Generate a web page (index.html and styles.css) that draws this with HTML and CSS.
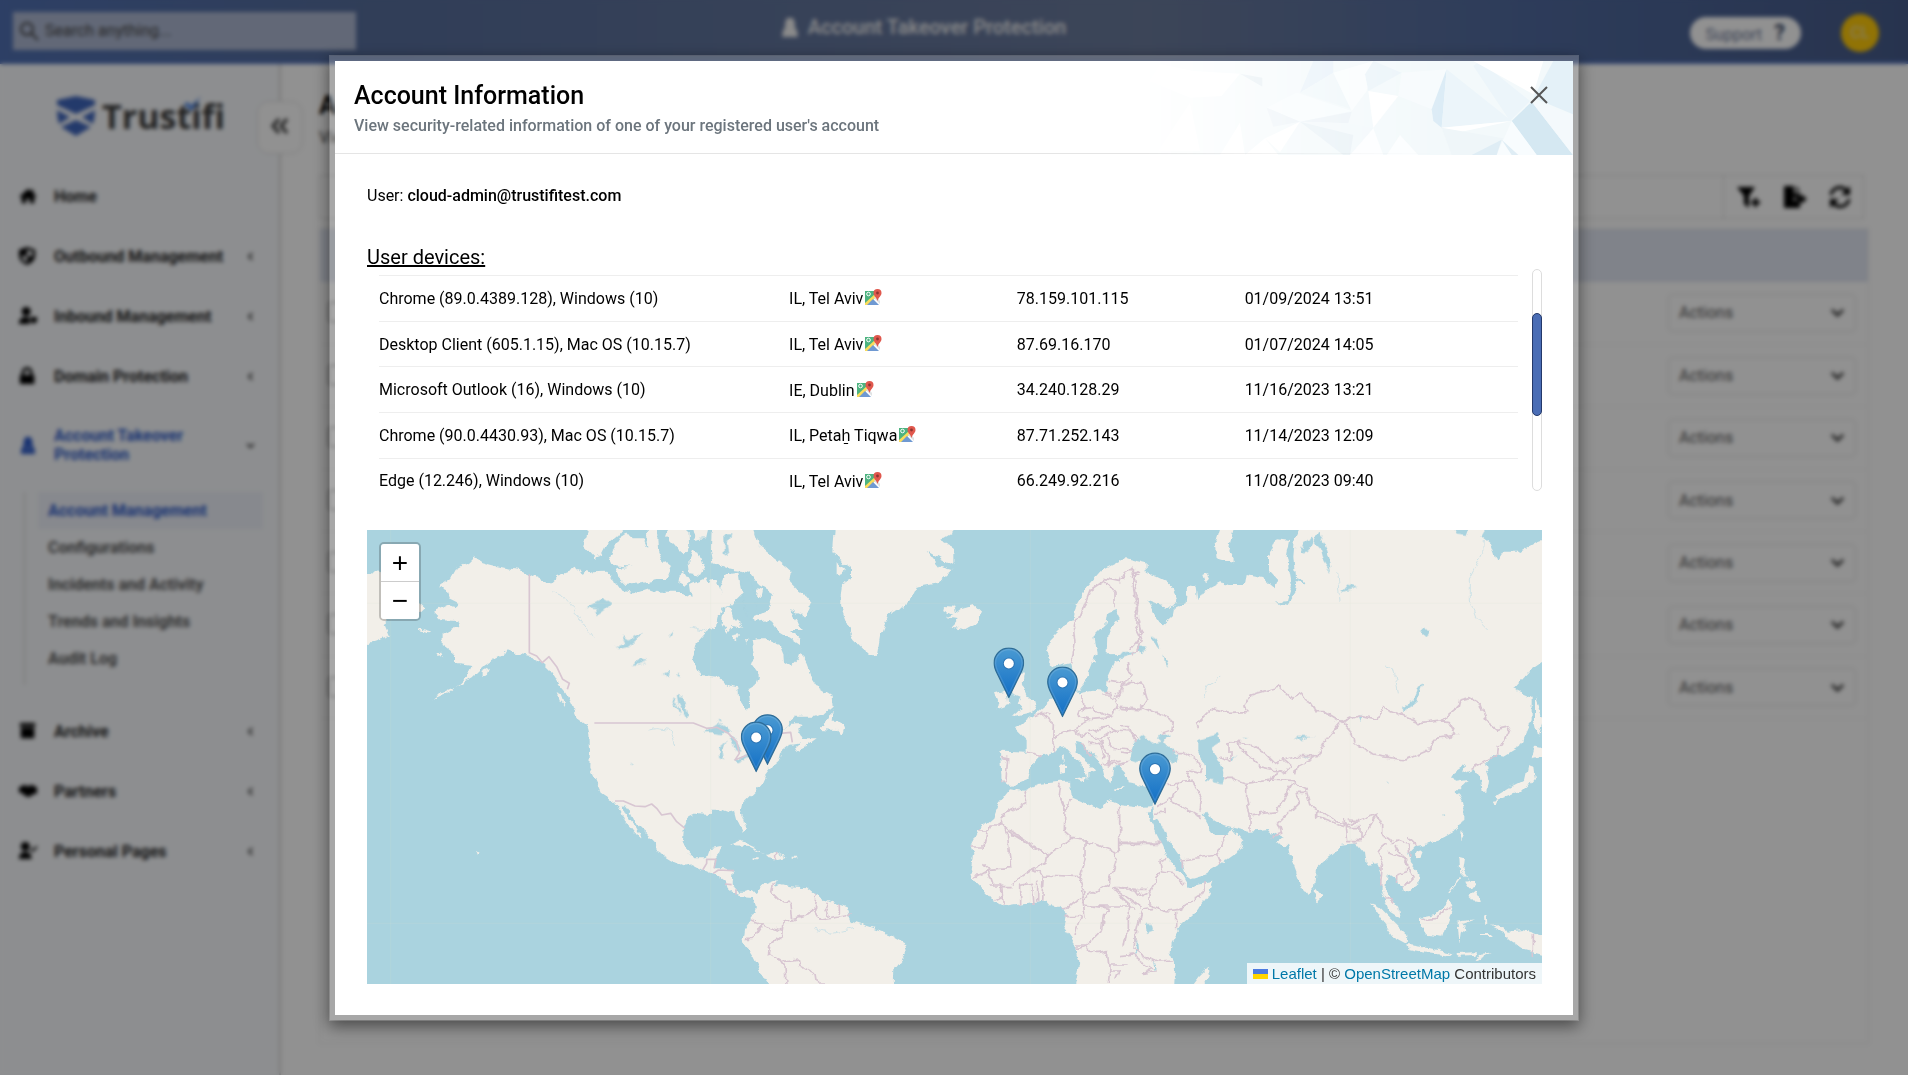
FILE: index.html
```html
<!DOCTYPE html>
<html lang="en">
<head>
    <meta charset="UTF-8">
    <meta name="viewport" content="width=device-width, initial-scale=1.0">
    <title>Account Takeover Protection</title>
    <link rel="stylesheet" href="styles.css">
</head>
<body>
    <svg class="sprite" aria-hidden="true">
        <symbol id="chevron" viewBox="0 0 16 16"><path d="M2 5l6 6 6-6" fill="none" stroke="currentColor" stroke-width="3"/></symbol>
        <symbol id="spy" viewBox="0 0 20 20"><path d="M7 1h6l2 5v5l2 2 1 7H2l1-7 2-2V6z" fill="currentColor"/><path d="M7 17l2-5h2l2 5" fill="none" stroke="#fff" opacity=".5"/></symbol>
        <symbol id="gmap" viewBox="0 0 18 18">
            <path d="M1 3h14v14H1z" fill="#fff"/>
            <path d="M1 3h10l3 5-13 9z" fill="#4db380"/>
            <path d="M1 15L11 6l2 2-9 9H1z" fill="#fbdc5b"/>
            <path d="M3 17l6-6 6 6z" fill="#6f99d2"/>
            <path d="M10 10l2-2 4 5v3z" fill="#dfe2e4"/>
            <circle cx="4.500" cy="6" r="1.800" fill="none" stroke="#fff"/>
            <path d="M13.500 1a4 4 0 0 1 4 4c0 3-3 4-4 8-1-4-4-5-4-8a4 4 0 0 1 4-4z" fill="#e0584d"/>
            <circle cx="13.500" cy="5" r="1.400" fill="#8f3430"/>
        </symbol>
        <linearGradient id="pin-fill" x1="0" y1="0" x2="0" y2="1"><stop offset="0" stop-color="#4a9ad2"/><stop offset="1" stop-color="#126fc6"/></linearGradient>
        <symbol id="pin" viewBox="0 0 25 41">
            <path d="M12.500.6C5.900.6.600 5.900.600 12.500c0 3 1 5.500 2.500 8.500l9.400 19.300L21.900 21c1.500-3 2.500-5.500 2.500-8.500C24.400 5.900 19.100.6 12.500.6z" fill="url(#pin-fill)" stroke="#2e6c97"/>
            <path d="M12.500 1.800a10.700 10.700 0 0 0-10.700 10.700c0 3 1 5 2.300 8L12.500 37.500l8.400-17c1.300-3 2.300-5 2.300-8A10.700 10.700 0 0 0 12.500 1.800z" fill="none" stroke="#fff" opacity=".12"/>
            <circle cx="12.500" cy="13" r="4.800" fill="#2d75b5"/>
            <circle cx="12.500" cy="13" r="4" fill="#fff"/>
        </symbol>
    </svg>

    <div class="app">
        <header class="topbar">
            <label class="search">
                <svg width="20" height="20" viewBox="0 0 20 20"><circle cx="8" cy="8" r="6" fill="none" stroke="#444" stroke-width="2"/><path d="M12 12l7 7" stroke="#444" stroke-width="2"/></svg>
                <input type="text" placeholder="Search anything..." aria-label="Search">
            </label>
            <div class="topbar-title">
                <svg width="20" height="22"><use href="#spy"/></svg>
                Account Takeover Protection
            </div>
            <div class="topbar-right">
                <button class="support">Support <b>?</b></button>
                <button class="avatar">CL</button>
            </div>
        </header>

        <div class="layout">
            <aside class="sidebar">
                <div class="logo">
                    <svg width="40" height="40" viewBox="0 0 40 40"><path d="M1 4L20 0l19 4v5L20 18 1 9zM1 14l13 7L3 28Q1 22 1 14zm38 0l-13 7 11 7q2-6 2-14zM5 31l15-7 15 7-15 9z" fill="#3f66bd"/></svg>
                    <span>Trustifi</span>
                    <svg class="tick" width="18" height="16" viewBox="0 0 18 16"><path d="M0 8l4-2 3 4L17 0 8 15z" fill="#3f7be0"/></svg>
                </div>
                <button class="collapse" aria-label="Collapse menu">
                    <svg width="18" height="18" viewBox="0 0 18 18"><path d="M8 2L2 9l6 7M16 2l-6 7 6 7" fill="none" stroke="#333" stroke-width="3"/></svg>
                </button>
                <nav class="menu">
                    <a href="#"><svg viewBox="0 0 20 20"><path d="M10 2L0 11h3v7h5v-5h4v5h5v-7h3l-4-4V3h-3v2z"/></svg><span>Home</span></a>
                    <a href="#"><svg viewBox="0 0 20 20"><path fill-rule="evenodd" d="M9 0l9 3v6c0 6-4 9-9 11-5-2-9-5-9-11V3zm0 3v7h6V5zm0 7H3c1 4 3 6 6 7z"/></svg><span>Outbound Management</span><svg class="arrow"><use href="#chevron"/></svg></a>
                    <a href="#"><svg viewBox="0 0 20 20"><circle cx="8" cy="5" r="5"/><path d="M0 19c0-6 3-8 8-8l4 1v7zM13 11h7v5l-4 3-3-3z"/></svg><span>Inbound Management</span><svg class="arrow"><use href="#chevron"/></svg></a>
                    <a href="#"><svg viewBox="0 0 20 20"><path fill-rule="evenodd" d="M1 9h2V6a6 6 0 0 1 12 0v3h2v10H1zm5 0h6V6a3 3 0 0 0-6 0z"/></svg><span>Domain Protection</span><svg class="arrow"><use href="#chevron"/></svg></a>
                    <a href="#" class="active"><svg><use href="#spy"/></svg><span>Account Takeover Protection</span><svg class="arrow open"><use href="#chevron"/></svg></a>
                    <div class="submenu">
                        <a href="#" class="current">Account Management</a>
                        <a href="#">Configurations</a>
                        <a href="#">Incidents and Activity</a>
                        <a href="#">Trends and Insights</a>
                        <a href="#">Audit Log</a>
                    </div>
                    <a href="#"><svg viewBox="0 0 20 20"><path d="M1 1h17v4H1zM2 6h15v12H2z"/></svg><span>Archive</span><svg class="arrow"><use href="#chevron"/></svg></a>
                    <a href="#"><svg viewBox="0 0 20 20"><path d="M0 6l6-3 4 2 4-2 6 3v7h-3l-6 4-5-2-3-3H0z"/></svg><span>Partners</span><svg class="arrow"><use href="#chevron"/></svg></a>
                    <a href="#"><svg viewBox="0 0 20 20"><circle cx="7" cy="5" r="5"/><path d="M0 19c0-6 3-8 7-8s7 2 7 8z"/><path d="M13 8l2 2 5-5" fill="none" stroke="#000" stroke-width="2"/></svg><span>Personal Pages</span><svg class="arrow"><use href="#chevron"/></svg></a>
                </nav>
            </aside>

            <main class="content">
                <h1>Account</h1>
                <p class="lead">View</p>
                <div class="toolbar">
                    <div class="tools">
                        <svg width="24" height="22" viewBox="0 0 24 22"><path d="M0 1h18l-6 9v12l-5-4v-8zM17 12h3v3h3v3h-3v3h-3v-3h-3v-3h3z"/></svg>
                        <svg width="24" height="22" viewBox="0 0 24 22"><path d="M1 0h10v7h6v4h-6v4h6v7H1zM13 0l4 5h-4zM18 8l6 5-6 5v-3h-5v-4h5z"/></svg>
                        <svg width="22" height="22" viewBox="0 0 22 22"><path d="M2 9a9 9 0 0 1 16-4M20 13A9 9 0 0 1 4 17" fill="none" stroke="#000" stroke-width="3"/><path d="M21 0v9h-9zM1 22v-9h9z"/></svg>
                    </div>
                </div>
                <div class="panel">
                    <table class="accounts">
                        <thead><tr><th></th><th></th></tr></thead>
                        <tbody>
                            <tr><td><input type="checkbox" aria-label="Select row 1"></td><td><div class="action"><select aria-label="Actions"><option>Actions</option></select><svg><use href="#chevron"/></svg></div></td></tr>
                            <tr><td><input type="checkbox" aria-label="Select row 2"></td><td><div class="action"><select aria-label="Actions"><option>Actions</option></select><svg><use href="#chevron"/></svg></div></td></tr>
                            <tr><td><input type="checkbox" aria-label="Select row 3"></td><td><div class="action"><select aria-label="Actions"><option>Actions</option></select><svg><use href="#chevron"/></svg></div></td></tr>
                            <tr><td><input type="checkbox" aria-label="Select row 4"></td><td><div class="action"><select aria-label="Actions"><option>Actions</option></select><svg><use href="#chevron"/></svg></div></td></tr>
                            <tr><td><input type="checkbox" aria-label="Select row 5"></td><td><div class="action"><select aria-label="Actions"><option>Actions</option></select><svg><use href="#chevron"/></svg></div></td></tr>
                            <tr><td><input type="checkbox" aria-label="Select row 6"></td><td><div class="action"><select aria-label="Actions"><option>Actions</option></select><svg><use href="#chevron"/></svg></div></td></tr>
                            <tr><td><input type="checkbox" aria-label="Select row 7"></td><td><div class="action"><select aria-label="Actions"><option>Actions</option></select><svg><use href="#chevron"/></svg></div></td></tr>
                        </tbody>
                    </table>
                </div>
            </main>
        </div>
    </div>

    <div class="overlay">
        <div class="modal" role="dialog" aria-labelledby="modal-title">
            <div class="modal-header">
                <svg class="facets" viewBox="0 0 1299 282" preserveAspectRatio="xMaxYMin slice" aria-hidden="true">
                    <rect width="1299" height="282" fill="#f3f9fb"/>
                    <path d="M150 110L245 105 300 38 160 30 60 10 30 60zM150 125L55 270H180z" fill="#fff"/>
                    <path d="M300 38l67 30v10zM380 140L470 95 635 150 480 182z" fill="#f7fcfe"/>
                    <path d="M300 38l67 12v27z" fill="#dfeaf0"/>
                    <path d="M480 95L520 0h60l0 35z" fill="#e7f1f9"/>
                    <path d="M480 95l100-60 55 110z" fill="#eff7fa"/>
                    <path d="M580 35L700 0 680 90 635 150z" fill="#fafdfe"/>
                    <path d="M700 0l85 35-100 55-10-50z" fill="#ebf4f9"/>
                    <path d="M685 90l90 15-75 95z" fill="#fff"/>
                    <path d="M785 35l-10 70 100 40 45-120z" fill="#f7fbfd"/>
                    <path d="M875 145l45-120-15 175-25-20z" fill="#dcecf6"/>
                    <path d="M920 25L905 200l210-20zM1020 0l-20 15 110 165 60-60z" fill="#ecf5fa"/>
                    <path d="M1000 0l180 100 30-100z" fill="#fff"/>
                    <path d="M1180 110L1240 0h59v160z" fill="#e4f1f8"/>
                    <path d="M1175 122l-60 58 75 102h109z" fill="#d5e8f2"/>
                    <path d="M1175 122l124 40v120z" fill="#f4f9fc"/>
                    <path d="M905 200l210-20-195 42z" fill="#fff"/>
                    <path d="M905 200l30 82h130l25-50z" fill="#eff6f9"/>
                    <path d="M1115 180l-45 102h120z" fill="#f8fcfe"/>
                    <path d="M1085 236l-90 46h75zM1085 236l50 46h-20z" fill="#dfedf5"/>
                    <path d="M380 140l100 42 155-30-10 35-145-5-80 15z" fill="#ebf2f7"/>
                    <path d="M480 182l-105 50 45 42z" fill="#fff"/>
                    <path d="M480 182l145 5 75 15-70 80z" fill="#f2f8fb"/>
                    <path d="M480 182l130 100h20l10-60z" fill="#e8f1f6"/>
                    <path d="M700 202l-70 80h100zM780 222l-40 60h95z" fill="#fcfeff"/>
                    <path d="M300 185l-60 97h75zM375 232l-60 50h100z" fill="#fff"/>
                </svg>
                <div class="modal-heading">
                    <h2 id="modal-title">Account Information</h2>
                    <p>View security-related information of one of your registered user's account</p>
                </div>
                <button class="close" aria-label="Close"><svg width="20" height="20" viewBox="0 0 20 20"><path d="M2 2l16 16M18 2L2 18" stroke="#555" stroke-width="2"/></svg></button>
            </div>

            <div class="modal-body">
                <p class="user">User: <b>cloud-admin@trustifitest.com</b></p>
                <h3>User devices:</h3>
                <div class="devices">
                    <table>
                        <tbody>
                            <tr><td>Chrome (89.0.4389.128), Windows (10)</td><td>IL, Tel Aviv<svg class="gmap"><use href="#gmap"/></svg></td><td>78.159.101.115</td><td>01/09/2024 13:51</td></tr>
                            <tr><td>Desktop Client (605.1.15), Mac OS (10.15.7)</td><td>IL, Tel Aviv<svg class="gmap"><use href="#gmap"/></svg></td><td>87.69.16.170</td><td>01/07/2024 14:05</td></tr>
                            <tr><td>Microsoft Outlook (16), Windows (10)</td><td>IE, Dublin<svg class="gmap"><use href="#gmap"/></svg></td><td>34.240.128.29</td><td>11/16/2023 13:21</td></tr>
                            <tr><td>Chrome (90.0.4430.93), Mac OS (10.15.7)</td><td>IL, Petaẖ Tiqwa<svg class="gmap"><use href="#gmap"/></svg></td><td>87.71.252.143</td><td>11/14/2023 12:09</td></tr>
                            <tr><td>Edge (12.246), Windows (10)</td><td>IL, Tel Aviv<svg class="gmap"><use href="#gmap"/></svg></td><td>66.249.92.216</td><td>11/08/2023 09:40</td></tr>
                        </tbody>
                    </table>
                    <div class="scrollbar"><div class="thumb"></div></div>
                </div>

                <div class="map">
                    <svg class="world" viewBox="21 30 3525 1362" preserveAspectRatio="xMidYMid slice" role="img" aria-label="Device locations">
                        <defs>
                            <filter id="coast" x="0" y="0" width="3600" height="1400" filterUnits="userSpaceOnUse">
                                <feTurbulence type="fractalNoise" baseFrequency=".035" numOctaves="3" seed="4"/>
                                <feDisplacementMap in="SourceGraphic" scale="22" xChannelSelector="R" yChannelSelector="G"/>
                            </filter>
                        </defs>
                        <rect x="0" y="0" width="3600" height="1420" fill="#aad3df"/>
                        <g class="land" filter="url(#coast)">
                            <!-- Americas -->
                            <path d="M0 155L60 158 120 200 195 265 180 280 120 250 70 310 87 350 0 380z"/>
                            <path d="M340 110L365 127 395 135 440 145 480 150 510 163 545 180 570 188 590 168 625 155 650 140 665 165 680 150 700 160 735 158 760 175 785 210 830 218 870 205 900 215 950 215 995 230 990 195 1035 175 1045 200 1055 180 1070 180 1085 225 1080 205 1100 160 1135 155 1145 225 1110 260 1085 265 1075 290 1070 320 1040 335 1010 370 1000 410 1005 430 1025 465 1070 470 1110 500 1135 505 1138 540 1160 573 1172 560 1165 510 1190 495 1197 465 1175 435 1185 410 1178 360 1190 355 1220 355 1235 365 1260 375 1270 400 1272 425 1295 440 1315 420 1322 398 1340 435 1355 475 1375 505 1415 530 1418 560 1395 580 1370 590 1305 590 1280 620 1240 645 1300 610 1322 610 1315 630 1330 655 1370 655 1335 680 1310 693 1305 683 1320 670 1290 675 1260 700 1255 720 1235 738 1215 765 1200 800 1150 850 1143 880 1158 925 1148 935 1133 905 1125 875 1105 880 1085 872 1060 872 1055 882 1010 880 985 892 973 920 968 960 975 985 1000 1012 1040 1012 1050 985 1085 978 1078 1000 1065 1015 1062 1045 1095 1045 1122 1052 1118 1090 1130 1115 1150 1122 1175 1110 1190 1125 1185 1135 1150 1132 1120 1118 1100 1102 1095 1085 1075 1070 1050 1060 1028 1050 1000 1035 975 1040 940 1025 890 995 888 970 850 930 830 915 810 875 795 855 788 858 800 885 820 910 845 955 835 950 815 925 795 905 785 880 765 845 725 818 710 785 688 740 690 690 688 640 683 620 650 595 640 560 620 520 595 490 570 450 545 425 510 408 470 400 440 388 430 405 405 418 370 440 335 475 290 500 325 465 340 435 300 430 285 430 285 405 245 375 245 345 280 325 298 320 292 300 245 298 222 275 262 255 290 262 300 250 270 235 260 210 237 198 270 175 285 148 325 125z"/>
                            <path d="M640 570L665 585 700 605 708 625 690 620 660 600zM590 520l12 4 12 35-14-15zM365 455l22-12-8 20-14 8zM228 400l16-2 4 10-14 2zM285 500l-40 18-28 20 50-22zM180 325l28 8-6 4-22-6z"/>
                            <path d="M785 45L760 85 750 115 760 135 815 140 765 145 775 170 800 195 840 190 890 180 920 180 935 145 910 125 895 95 890 20 860 25 865 90 850 55 815 55 800 35zM685 20L672 85 700 115 725 105 740 75 775 45 795 20zM920 50L945 75 965 110 985 90 982 20 930 20zM1000 90L1015 95 1032 145 1020 165 990 160 985 125zM995 20L1040 20 1032 55 1005 60zM960 165l15-10 20 30-20 15-20-10z"/>
                            <path d="M1055 20L1053 90 1060 130 1100 145 1145 150 1170 155 1200 195 1240 220 1225 270 1180 290 1185 305 1230 300 1250 330 1290 355 1320 375 1320 355 1290 330 1325 330 1315 310 1290 270 1335 290 1355 250 1340 230 1310 210 1290 190 1295 155 1265 130 1240 110 1200 80 1180 20z"/>
                            <path d="M1090 265l25 5 10 30 25 20-35-5-15 20-15-20zM1192 205l18 4-5 22-17-4zM1115 350l25-5-10 16zM1158 353l10 4-6 14zM1418 568L1400 600 1380 627 1430 630 1445 648 1452 625 1440 605 1415 605z"/>
                            <path d="M1110 975L1140 962 1180 980 1215 1003 1165 978zM1220 1006l25-10 38 14-35 9-28-6zM1295 1010h17v6h-17zM1178 1012h18v6h-18zM345 990l14 8-8 8z"/>
                            <g transform="translate(1140 0)">
                                <path d="M0 1115L40 1115 45 1125 70 1095 110 1080 105 1100 125 1095 150 1102 200 1105 225 1125 265 1145 320 1165 335 1205 395 1225 450 1245 495 1270 500 1300 460 1350 457 1410 95 1410 70 1370 40 1310 8 1260 12 1225 35 1195 48 1160 38 1125 0 1127z"/>
                                <path d="M285 10L280 90 300 120 330 140 330 180 305 195 300 255 320 310 340 360 370 390 410 410 420 350 445 285 480 270 510 240 530 200 590 190 635 150 600 140 560 90 640 135 640 80 600 60 650 30 640 10zM290 130l25 15-10 25-15-10z"/>
                                <path d="M615 258L640 260 645 280 665 265 700 255 725 280 715 305 675 328 635 320 650 300 620 295 640 285 612 270z"/>
                                <!-- Europe and Africa -->
                                <path d="M812 798L785 780 780 700 785 692 860 695 860 660 825 625 850 605 890 580 930 545 950 520 950 500 960 460 985 450 990 500 1015 520 1060 512 1095 515 1100 480 1110 460 1125 425 1160 418 1220 400 1220 640 1195 690 1190 720 1155 735 1120 740 1115 790 1095 770 1085 735 1060 705 1020 670 1005 665 1010 695 1050 730 1065 755 1045 760 1045 780 1030 745 975 682 950 690 900 710 875 735 865 775 830 790zM1005 775l35-5-5 18zM962 735l13-5v28l-12 4zM965 710l7-4-2 20zM1120 802h30v5h-30z"/>
                                <path d="M940 440L925 420 925 365 960 330 1000 300 1010 250 1040 200 1080 155 1120 135 1160 115 1220 130 1220 400 1100 403 1102 340 1140 290 1130 270 1105 280 1100 310 1060 350 1070 400 1050 450 1040 480 1010 515 990 430z"/>
                                <path d="M825 480L850 455 845 485 865 530 890 550 880 575 815 590 845 565 830 555 845 530 820 520zM765 520L800 510 805 555 770 568 775 545z"/>
                                <path d="M810 805L850 812 895 792 960 785 990 785 995 830 1040 850 1080 870 1105 840 1140 855 1190 862 1240 858 1220 880 1240 920 1270 980 1285 1020 1320 1055 1335 1085 1345 1100 1420 1085 1405 1125 1365 1180 1320 1220 1295 1260 1292 1300 1308 1340 1305 1410 1000 1410 1018 1330 1005 1270 970 1220 980 1180 960 1160 935 1160 920 1142 880 1150 830 1155 790 1162 760 1145 735 1115 700 1080 692 1050 700 1000 692 975 715 930 760 890 775 850zM1405 1340L1410 1365 1390 1410 1345 1410 1375 1370z"/>
                            </g>
                            <g transform="translate(2280 0)">
                                <!-- Asia -->
                                <path d="M0 120L30 130 60 150 110 170 150 190 172 240 160 262 125 255 85 240 110 290 130 318 160 290 165 265 200 250 205 195 230 200 235 240 250 215 300 190 330 195 375 195 380 165 430 175 465 205 475 180 447 150 447 110 470 55 510 60 500 110 515 190 500 240 470 245 500 255 525 215 530 180 560 190 570 220 550 180 525 170 520 110 525 50 545 10 1100 10 1085 50 1110 70 1130 125 1150 95 1200 95 1250 65 1290 50 1290 410 1230 450 1180 505 1235 530 1235 600 1200 680 1150 710 1120 705 1095 735 1110 780 1105 815 1085 815 1080 770 1060 745 1030 760 1035 735 990 765 1005 785 1040 780 1010 810 1030 850 1030 895 1005 935 960 960 905 975 880 980 862 1000 870 1030 895 1060 895 1090 855 1118 850 1100 830 1085 800 1065 795 1110 835 1165 840 1195 810 1175 785 1110 785 1070 770 1030 740 1035 735 1000 710 970 660 975 640 1000 588 1045 582 1100 560 1125 545 1100 515 1020 505 970 490 985 470 965 490 955 445 930 390 935 345 925 310 915 270 890 262 875 245 880 270 925 285 945 320 945 335 925 370 965 350 1000 300 1035 260 1060 200 1078 190 1050 180 1010 145 960 125 915 110 895 105 900 100 860 110 800 80 800 20 790 15 755 0 740z"/>
                                <path d="M305 10L285 75 290 115 345 130 325 90 345 10zM247 168l12-6 8 14-12 14zM1225 735L1240 740 1245 780 1225 805 1180 820 1130 840 1125 830 1175 800 1215 780zM1118 842l17-2-5 22zM1245 680L1290 690 1266 708 1235 715zM1245 535L1258 570 1270 600 1255 650 1245 600zM1018 935h12l-8 33zM885 995l25-5-8 20-15 2zM585 1105L605 1130 595 1147 583 1140z"/>
                                <path d="M750 1150L775 1160 830 1215 862 1245 860 1272 820 1250 785 1200zM862 1275L930 1285 1000 1300 990 1308 920 1298 865 1287zM1010 1302l60-2-4 8-55 2zM1080 1302l35-5-50 25zM900 1195L945 1185 985 1140 1000 1155 990 1190 970 1250 920 1245 900 1215zM1010 1205L1065 1198 1025 1212 1045 1240 1020 1235 1015 1272zM1018 1010L1035 1015 1030 1050 1050 1080 1020 1050zM1045 1130L1070 1110 1080 1145 1055 1140zM1035 1085l30-5 8 20-25 5zM1095 1190l8-4 2 25-8 4zM1110 1220L1150 1218 1160 1235 1210 1230 1290 1255 1290 1310 1215 1290 1170 1260 1150 1240zM1080 1245h40v6h-40zM1020 1070l-35 50 4-1 34-44z"/>
                            </g>
                        </g>
                        <g class="water" filter="url(#coast)">
                            <path d="M1030 640L1060 622 1075 612 1112 632 1105 645 1070 640zM1100 665L1088 690 1092 720 1078 715 1075 685zM1100 648L1125 656 1140 670 1140 700 1126 690 1115 662zM1125 722L1165 703 1168 710 1135 727zM680 262L710 245 735 238 755 250 735 270 708 290 702 280 715 265zM768 382L795 370 785 350 805 362 850 335 840 350 800 385 775 390zM815 435L835 418 865 422 835 432zM950 525L970 530 985 585 975 588 955 550zM935 535l8 4 20 40-6 4zM912 460l14-6-4 22zM1092 40l22 0-10 40 5 30-15-10zM950 465l10-4-2 10zM1075 600h10l-4 8zM925 340l14-8-8 16zM1140 160l30 20 20 60-10 60-25-30-10-80zM808 724l10 8-2 4zM1275 400l10-4 4 10-8 4z"/>
                            <g transform="translate(2280 0)">
                                <path d="M30 722L40 670 70 648 95 670 125 665 110 650 150 640 135 668 175 705 170 725 100 715 50 730zM235 660L295 642 298 665 275 680 305 740 310 760 305 790 258 780 258 740 235 690zM845 565L882 535 900 492 906 495 890 545 855 570zM518 665L540 650 580 650 530 660zM55 375L80 380 65 405zM0 400L52 396 0 416zM95 350l18 12 8 22-15-5zM130 400l18 40-14-12zM80 240l50 20-30-5zM550 710l22-4-18 8zM370 650l16 2-10 4zM335 715l12-5-6 12zM595 40l18 30 15 55 5 30-20-30-10-40-20-20zM545 70l30-20 8 10-20 40zM665 215l20-25 30 10-35 10zM75 1215h20l4 16-18 8zM900 325l30 5-12 24zM715 585l15-2-8 20zM540 80l30 15-20 5zM1000 20h50l-10 28-30-4z"/>
                                <path d="M45 1255l4 40 6 4-4-46zM95 1315l10 40-5 0zM795 785l12 2-5 6zM970 882l6 2-4 5z"/>
                            </g>
                        </g>
                        <g class="rivers" filter="url(#coast)">
                            <path d="M580 215l30 15 30 30 20 40 40 55M865 630l25-4 40 5 14 50M985 320l55 12M3370 60l-2 40-40 80 0 60 20 55 35 35M2930 160l10 80M2530 530l10-30 45-30M3070 435l30 5 15 80M1360 1225l60 15 60-15"/>
                        </g>
                        <g class="borders">
                            <path d="M508 163V398L530 408 547 428 567 410 590 440 608 478 628 490 622 508M703 609H1000L1040 625 1070 622 1105 640 1130 665 1138 700 1125 720 1160 706M765 843L790 843 825 858 855 860 875 852 890 865 905 885 932 880 950 905 975 925M1028 1050L1040 1030 1040 1018 1068 1018 1062 1045M1060 1060L1075 1050 1122 1052M1095 1092l20 2M1128 1108v16M1262 640l30-3 5 30"/>
                            <g transform="translate(1140 0)" filter="url(#coast)">
                                <path d="M100 1085L95 1115 125 1145 152 1148 158 1200 130 1205 125 1250 90 1275 85 1300 125 1325 135 1340 138 1392M35 1200L68 1212 40 1255 15 1255M68 1215l60 20M130 1325l45-8 5 20 45 25 5 30h22M158 1200l45-15 20-15 5-50M223 1165l20 35 95-15M265 1145l-8 25 8 22M298 1155v30M110 995v22"/>
                                <path d="M860 696l45 12M785 712l18 4-5 65-15 0M900 577l40 35-2 50 5 35M880 590l30-10 25 5M940 655l25-15 40-8 5-15 40-20-35-10 8-20 35-5 25 20 30 8M1025 525l5 50M1095 518l15 0 20 40-15 35-60 5M1100 480l50 8 20-20-5-45M1112 525h-25M1150 490l-10 30-15 10M1135 565l70 3M1045 635l60-15 20 10-40 25-40-10-30 5-5-20M1125 630l45 3 25 25M1100 655l20 30 55 5M1045 670l35 0 15 40-10 10M1080 660l25 40 0 35 60-10M1085 735l60-15M1020 665l30 40"/>
                                <path d="M995 430L1005 370 1000 320 1020 290 1050 210 1095 180 1125 220 1125 265M1095 175l45 10 15-35 20-2 15 15-10 35 12 70-5 55 15 30-10 40-15 10M960 788l-5 35 20 45-2 65 25 22-78 48-145-95M960 830l20 40 15-30M852 812l8 35-78 42v22M715 930h30l5-15h35v-8M782 908l20 30 10 105-65 5-20-18M805 935l115 70-5 25-40 20-60 40M692 978h40l10-45M1000 955l32 5 95 35 12-5V860M1140 970h120M1035 960l0 60-15 50-110-5-35-15M700 1065h25M700 1075l45-25 15 45M745 1095h40l0 35-20 10M785 1100h30M790 1160l-5-60M842 1155v-60l35-5 5 65M890 1145v-60M905 1142l5-75M1020 1070l15 50-45 40-25 5M1127 995l0 35-20 60-70 40-10 20M1030 1155l80 10-20 20-5 45-50 50-30 5M975 1187h50l-20 55M1025 1110l10 80M1035 1158l130 0-45-55 15 0 55 5 30 0M1125 1105l80 60M1005 1275h35l10 22h30l25-5 5 50-5 50M1108 1335h55M1165 1160l0 60-10 60M1108 1350h30l-10 25"/>
                            </g>
                            <g transform="translate(2280 0)" filter="url(#coast)">
                                <path d="M235 625L230 610 275 565 330 580 385 578 375 560 390 525 480 500 515 535 550 518 585 575 615 575 665 605 715 585 775 598 785 560 900 608 960 600 985 605 1010 645 950 655 915 695 855 720 755 705 705 670 700 645 665 605M965 600L1015 560 1020 540 1050 533 1080 550 1095 600 1130 628 1170 620 1150 672 1132 675 1130 705 1055 748M665 605l-50 60-20 45-70 0-60 20-30-30-50-30-55-5v60M330 725l-30-15M310 775l30 0 40 15 75-10 10-30-45-10-75-75M380 790v50l10 45 0 50M390 885l80-10 50-90-65-5M465 745l30 15 20-20-30-25M520 790l45 20-10 10-30 0 15 25-65 65 10 30-30 10M530 760l5-25 60-30M560 810l15 50 100 55 40-10 55-20 15 30 0 30 35 15M590 870l0 20 80 30v-20M675 910l5 55 40 0 0-45-40 0M680 900l35 2M765 890l-30 50-20 20M800 970l-25 20 15 40-5 70M805 1000l55 20 0 35-30 10 0 25M815 970l20-10 30 10 5 40M825 975l20 35 35 60-30 30M870 955l20 20M200 750l40 10 5-30-55-35-35 0M200 755l15 30 30 50-5 40M140 790l70-5-5-30M110 860l50-30 20-45M150 840l90 50M105 880l30 0 0-20M190 1050l0-30 100-15 30-60M290 1005l10 25M0 970h125M140 1018l-20 10 5 25 35 5 35 35M120 1055l-30 60 0 40 50 18 40-5 60-40 15-25v-20M95 1115l-30 15-15-20-50-5M0 1130l45 40M170 1225v-50M50 1290l50 35 60-5M45 1290l5-60 15-60 35-5M900 1200l55-5 20-30 20 0M1240 1240v70M800 1130l20 20M0 565l60 5 20-30-15-50-30-5-35 15M60 560l100 40-5 30-30 10M0 620l25 0 30 45M40 145l0 30 12 60 0 60 15 50-35 45M60 160l-25 15M0 690l30 5M0 1310l40-5 55 40-30 15 45-5"/>
                            </g>
                        </g>
                        <path class="tiles" d="M92 30v1362M1052 30v1362M2011 30v1362M2971 30v1362M21 250h3525M21 1210h3525"/>
                        <use href="#pin" x="1900" y="382" width="93" height="153"/>
                        <use href="#pin" x="2061" y="439" width="93" height="153"/>
                        <use href="#pin" x="1176" y="582" width="93" height="153"/>
                        <use href="#pin" x="1142" y="604" width="93" height="153"/>
                        <use href="#pin" x="2337" y="696" width="96" height="160"/>
                    </svg>
                    <div class="zoom">
                        <button aria-label="Zoom in">+</button>
                        <button aria-label="Zoom out">−</button>
                    </div>
                    <div class="attribution">
                        <svg width="15" height="10" viewBox="0 0 15 10"><path d="M0 0h15v5H0z" fill="#4c7be1"/><path d="M0 5h15v5H0z" fill="#ffd500"/></svg>
                        <a href="#">Leaflet</a> | © <a href="#">OpenStreetMap</a> Contributors
                    </div>
                </div>
            </div>
        </div>
    </div>
</body>
</html>
```
FILE: styles.css
```css
* {
    box-sizing: border-box;
}
body {
    margin: 0;
    min-height: 100vh;
    font-family: Roboto, sans-serif;
    font-size: 16px;
    color: #000;
    background-color: #fff;
}
h1, h2, h3, p {
    margin: 0;
}
a {
    text-decoration: none;
}
button, input, select {
    font-family: inherit;
    font-size: 16px;
}
.sprite {
    position: absolute;
    width: 0;
    height: 0;
}

/* Page behind the dialog */
.app {
    display: flex;
    flex-direction: column;
    height: 100vh;
    overflow: hidden;
}
.topbar {
    display: grid;
    grid-template-columns: 1fr auto 1fr;
    align-items: center;
    height: 64px;
    padding: 0 29px 0 13px;
    background: linear-gradient(to right, #5070b2, #566d9b 20%, #6a7a9c 60%, #506a9f 80%, #465b8a);
    border-bottom: 3px solid #5070b8;
}
.search {
    display: flex;
    align-items: center;
    gap: 4px;
    width: 343px;
    height: 38px;
    padding: 0 6px;
    background-color: #adb8d2;
}
.search input {
    flex: 1;
    min-width: 0;
    border: none;
    background: none;
}
.search input::placeholder {
    color: #444;
}
.topbar-title {
    display: flex;
    align-items: center;
    gap: 8px;
    padding: 0 46px 8px 0;
    font-size: 20px;
    font-weight: 500;
    color: #f2f2f2;
}
.topbar-right {
    display: flex;
    justify-content: flex-end;
    align-items: center;
    gap: 40px;
    padding-top: 4px;
}
.support {
    height: 32px;
    padding: 0 16px;
    border: none;
    border-radius: 16px;
    background-color: #fff;
    color: #6a7796;
}
.support b {
    margin-left: 8px;
    font-size: 22px;
    line-height: 24px;
    color: #34435f;
}
.avatar {
    width: 38px;
    height: 38px;
    padding: 0;
    border: none;
    border-radius: 50%;
    background-color: #ffca0a;
    color: #e8e0c0;
}
.layout {
    display: flex;
    flex: 1;
    min-height: 0;
}
.sidebar {
    position: relative;
    flex: 0 0 281px;
    background-color: #f8fafd;
    border-right: 2px solid #d4d4d4;
}
.logo {
    position: relative;
    display: flex;
    align-items: center;
    gap: 6px;
    padding: 26px 0 0 56px;
    height: 78px;
    font-family: "Open Sans", sans-serif;
    font-size: 34px;
    font-weight: 700;
    color: #3c3c3c;
}
.tick {
    position: absolute;
    top: 32px;
    left: 184px;
}
.collapse {
    position: absolute;
    top: 37px;
    right: -24px;
    width: 46px;
    height: 53px;
    border: 1px solid #ddd;
    border-radius: 12px;
    background-color: #fff;
}
.menu {
    padding: 24px 24px 0 18px;
}
.menu > a {
    display: flex;
    align-items: center;
    gap: 16px;
    height: 60px;
    font-weight: 700;
    line-height: 19px;
    color: #222;
}
.menu > a svg {
    flex: 0 0 20px;
    height: 18px;
}
.menu > a span {
    flex: 1;
}
.menu > a svg.arrow {
    flex: 0 0 9px;
    height: 9px;
    color: #333;
    transform: rotate(90deg);
}
.menu > a svg.open {
    transform: none;
}
.menu > a.active {
    height: 78px;
    color: #2c5ac8;
}
.submenu {
    display: flex;
    flex-direction: column;
    margin: 8px -8px 16px 6px;
    padding: 0 0 8px 13px;
    border-left: 1px solid #ccc;
}
.submenu a {
    padding: 0 10px;
    line-height: 37px;
    font-weight: 700;
    color: #555;
}
.submenu a.current {
    background-color: #eef1f9;
    color: #2c5ac8;
}
.content {
    flex: 1;
    padding: 24px 39px 32px 38px;
    background-color: #fff;
}
.content h1 {
    font-size: 26px;
    line-height: 34px;
}
.lead {
    line-height: 32px;
    font-weight: 500;
    color: #666;
}
.toolbar {
    display: flex;
    justify-content: flex-end;
    height: 44px;
    margin: 21px 5px 9px 0;
    border: 1px solid #ddd;
}
.tools {
    display: flex;
    align-items: center;
    gap: 22px;
    padding: 0 12px 0 13px;
    border-left: 1px solid #ddd;
}
.panel {
    height: 816px;
    border: 1px solid #eee;
}
.accounts {
    width: 100%;
    height: 490px;
    border-collapse: collapse;
}
.accounts th {
    height: 53px;
    background-color: #e1e6f2;
}
.accounts td {
    height: 62px;
    padding: 0 12px 0 4px;
    border-bottom: 1px solid #f2f2f2;
}
.accounts input {
    width: 20px;
    height: 20px;
}
.action {
    display: flex;
    align-items: center;
    width: 188px;
    height: 38px;
    margin-left: auto;
    padding-right: 10px;
    border: 1px solid #ddd;
    border-radius: 5px;
}
.action select {
    flex: 1;
    padding-left: 10px;
    border: none;
    background: none;
    appearance: none;
    color: #555;
}
.action svg {
    width: 15px;
    height: 15px;
    color: #444;
}

/* Dialog */
.overlay {
    position: fixed;
    inset: 0;
    display: flex;
    align-items: flex-start;
    justify-content: center;
    padding-top: 55px;
    background-color: rgba(0, 0, 0, 0.43);
    backdrop-filter: blur(2px);
}
.modal {
    width: 90%;
    max-width: 1250px;
    border: 6px solid rgba(255, 255, 255, 0.2);
    background-color: #fff;
    background-clip: padding-box;
    box-shadow: 0 5px 15px rgba(0, 0, 0, 0.5);
}
.modal-header {
    position: relative;
    display: flex;
    justify-content: space-between;
    align-items: flex-start;
    height: 93px;
    padding: 20px 24px 0 19px;
    border-bottom: 1px solid #e5e5e5;
}
.facets {
    position: absolute;
    top: 0;
    right: 0;
    width: 433px;
    height: 94px;
    mask-image: linear-gradient(to right, transparent, rgba(0, 0, 0, 0.6) 35%, #000 70%);
}
.modal-heading {
    position: relative;
}
.modal-heading h2 {
    font-size: 25px;
    line-height: 29px;
    font-weight: 500;
}
.modal-heading p {
    line-height: 32px;
    font-weight: 500;
    color: #6c757d;
}
.close {
    position: relative;
    display: flex;
    margin-top: 4px;
    padding: 0;
    border: none;
    background: none;
}
.modal-body {
    padding: 32px 31px 31px 32px;
}
.user {
    line-height: 20px;
}
.user b {
    font-weight: 500;
}
.modal-body h3 {
    margin-top: 39px;
    font-size: 20px;
    line-height: 24px;
    font-weight: 400;
    text-decoration: underline;
}
.devices {
    display: flex;
    gap: 14px;
    height: 222px;
    margin-bottom: 39px;
    padding-left: 12px;
}
.devices table {
    flex: 1;
    height: 228px;
    margin-top: 6px;
    border-collapse: collapse;
    table-layout: fixed;
}
.devices tr {
    border-top: 1px solid #eee;
}
.devices td {
    width: 20%;
    padding: 0;
}
.devices td:first-child {
    width: 36%;
}
.devices td:last-child {
    width: 24%;
}
.gmap {
    width: 18px;
    height: 18px;
    margin-left: 1px;
    vertical-align: -2px;
}
.scrollbar {
    width: 10px;
    padding-top: 43px;
    border: 1px solid #ddd;
    border-radius: 5px;
}
.thumb {
    height: 103px;
    margin: 0 -1px;
    border: 1px solid #24396a;
    border-radius: 5px;
    background-color: #4a6db5;
}
.map {
    position: relative;
    aspect-ratio: 1175 / 454;
    overflow: hidden;
}
.world {
    display: block;
    width: 100%;
    height: 100%;
}
.land {
    fill: #f2efe9;
}
.water {
    fill: #aad3df;
}
.rivers, .borders, .tiles {
    fill: none;
}
.rivers {
    stroke: #cfe2e6;
    stroke-width: 3;
}
.borders {
    stroke: #d8c6d2;
    stroke-width: 5;
    stroke-linejoin: round;
}
.tiles {
    stroke: #d5e0d0;
    stroke-width: 2;
    opacity: 0.25;
}
.zoom {
    position: absolute;
    top: 12px;
    left: 12px;
    display: flex;
    flex-direction: column;
    border: 2px solid rgba(0, 0, 0, 0.2);
    border-radius: 5px;
    background-clip: padding-box;
}
.zoom button {
    width: 38px;
    height: 37px;
    padding: 0;
    border: none;
    border-radius: 0 0 3px 3px;
    background-color: #fff;
    font-family: "Liberation Sans", sans-serif;
    font-size: 28px;
    line-height: 36px;
}
.zoom button:first-child {
    height: 38px;
    border-bottom: 1px solid #ccc;
    border-radius: 3px 3px 0 0;
}
.attribution {
    position: absolute;
    right: 0;
    bottom: 0;
    padding: 0 6px;
    background-color: rgba(255, 255, 255, 0.8);
    font-family: "Liberation Sans", sans-serif;
    font-size: 15px;
    line-height: 21px;
    color: #333;
}
.attribution a {
    color: #0078a8;
}
```
